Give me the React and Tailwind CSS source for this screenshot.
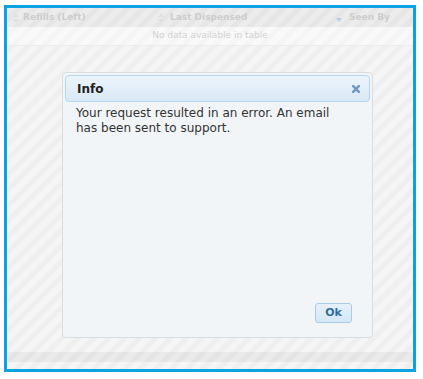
import React from 'react';

const stripes =
  'bg-[repeating-linear-gradient(135deg,#f5f5f5_0px,#f5f5f5_6px,#efefef_6px,#efefef_11px)]';

function SortIcon({ active }) {
  if (active) {
    return (
      <svg width="6" height="10" viewBox="0 0 6 10">
        <path d="M0 5 L6 5 L3 9 Z" fill="#bfcbe8" />
      </svg>
    );
  }
  return (
    <svg width="6" height="10" viewBox="0 0 6 10">
      <path d="M0 4 L6 4 L3 0 Z" fill="#e0e0e0" />
      <path d="M0 6 L6 6 L3 10 Z" fill="#e0e0e0" />
    </svg>
  );
}

export default function App() {
  return (
    <div className="relative w-[423px] h-[379px] bg-white font-['DejaVu_Sans',sans-serif] overflow-hidden">
      {/* table behind the modal */}
      <div className={`ml-[4px] mt-[5px] w-[412px] h-[367px] border-[3px] border-[#0aa2e3] flex flex-col ${stripes}`}>
        <div className="h-[19px] bg-black/[0.035] flex items-center text-[9px] font-bold text-[#cdcdcd]">
          <div className="w-[143px] flex items-center gap-[4px] pl-[6px]">
            <SortIcon />
            <span>Refills (Left)</span>
          </div>
          <div className="w-[180px] flex items-center gap-[6px] pl-[8px]">
            <SortIcon />
            <span>Last Dispensed</span>
          </div>
          <div className="flex items-center gap-[7px] pl-[6px]">
            <SortIcon active />
            <span>Seen By</span>
          </div>
        </div>
        <div className="h-[19px] bg-white/40 border-b border-[#ececec] flex items-center justify-center text-[9px] text-[#d2d2d2]">
          No data available in table
        </div>
        <div className="flex-1" />
        <div className="h-[10px] bg-black/[0.045]" />
        <div className="h-[7px]" />
      </div>

      {/* modal dialog */}
      <div className="absolute left-[62px] top-[72px] w-[311px] h-[266px] rounded-[4px] border border-[#dadde0] bg-[#f2f5f8] p-[2px] flex flex-col">
        <div className="h-[27px] rounded-[4px] border border-[#b5d6ee] bg-gradient-to-b from-[#ecf4fb] to-[#d9e9f6] flex items-center justify-between pl-[11px] pr-[9px]">
          <span className="text-[12px] font-bold text-[#222]">Info</span>
          <svg width="8" height="8" viewBox="0 0 8 8">
            <path d="M1.2 1.2 L6.8 6.8 M6.8 1.2 L1.2 6.8" stroke="#7199c5" strokeWidth="2.6" strokeLinecap="square" />
          </svg>
        </div>
        <div className="flex-1 flex flex-col">
          <p className="mt-[4px] pl-[11px] w-[275px] text-[12px] leading-[15px] text-[#333]">
            Your request resulted in an error. An email has been sent to support.
          </p>
          <div className="flex-1" />
          <div className="flex justify-end pr-[18px] pb-[12px]">
            <button className="w-[37px] h-[20px] rounded-[3px] border border-[#a9cbe6] bg-gradient-to-b from-[#e6f1fb] to-[#d5e7f7] text-[11px] font-bold text-[#2e6e9e] flex items-center justify-center">
              Ok
            </button>
          </div>
        </div>
      </div>
    </div>
  );
}
